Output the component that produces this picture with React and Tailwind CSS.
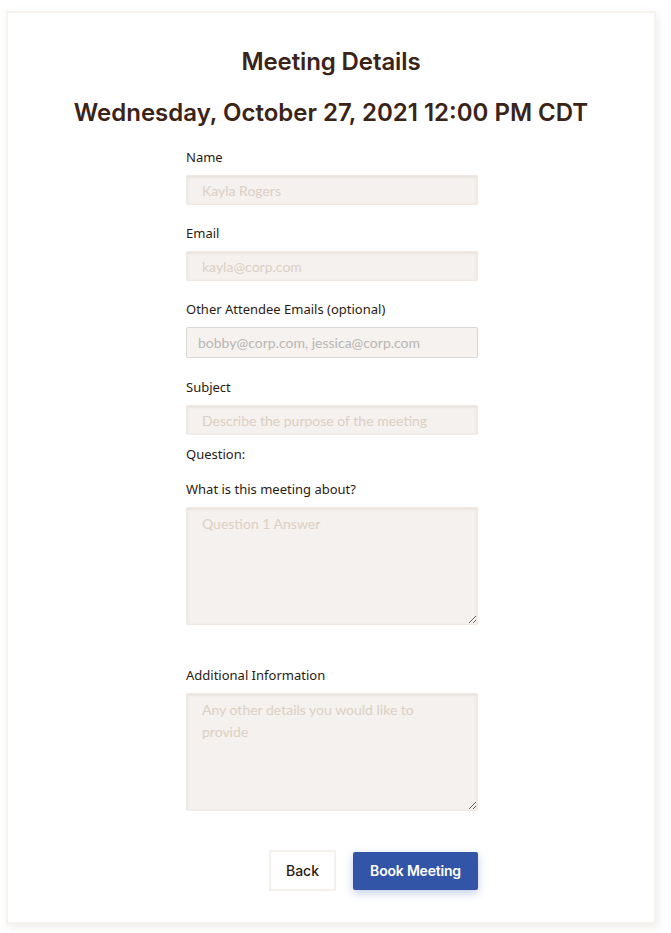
import React from "react";

const labelCls = "block text-[13px] leading-[18px] text-[#2b1a12]";
const inputCls =
  "block w-[292px] h-[30px] bg-[#f5f1ee] rounded-[2px] border border-[#f0e9e4] shadow-[inset_0_1px_3px_rgba(120,90,60,0.12)] pl-[15px] text-[14px] text-[#3a2a20] placeholder:text-[#dccfc4] outline-none";
const font = { fontFamily: "'Noto Sans', sans-serif" };
const phFont = { fontFamily: "Lato, 'Noto Sans', sans-serif" };

export default function App() {
  return (
    <div className="w-[671px] h-[933px] bg-white pt-[11px] pl-[6px]">
      <div className="w-[650px] h-[913px] bg-white border-2 border-[#f6f2ee] shadow-[2px_3px_8px_rgba(120,100,80,0.12)] flex flex-col items-center">
        <h1
          className="mt-[33px] text-[24px] leading-[32px] font-semibold text-[#3a2317] tracking-[-0.1px]"
          style={{ fontFamily: "Inter, sans-serif" }}
        >
          Meeting Details
        </h1>
        <h2
          className="mt-[18px] text-[24px] leading-[34px] font-semibold text-[#3a2317] tracking-[0px]"
          style={{ fontFamily: "Inter, sans-serif" }}
        >
          Wednesday, October 27, 2021 12:00 PM CDT
        </h2>
        <div className="w-[292px] mt-[18px] ml-[2px]" style={font}>
          <label className={labelCls}>Name</label>
          <input className={inputCls + " mt-[9px]"} style={phFont} placeholder="Kayla Rogers" />
          <label className={labelCls + " mt-[19px]"}>Email</label>
          <input className={inputCls + " mt-[9px]"} style={phFont} placeholder="kayla@corp.com" />
          <label className={labelCls + " mt-[19px]"}>Other Attendee Emails (optional)</label>
          <input
            className="block mt-[9px] w-[292px] h-[31px] bg-[#f5f2ef] rounded-[2px] border border-[#d9d6d3] pl-[11px] text-[14px] placeholder:text-[#b9b6b3] outline-none"
            style={phFont}
            placeholder="bobby@corp.com, jessica@corp.com"
          />
          <label className={labelCls + " mt-[20px]"}>Subject</label>
          <input className={inputCls + " mt-[9px]"} style={phFont} placeholder="Describe the purpose of the meeting" />
          <div className={labelCls + " mt-[10px]"}>Question:</div>
          <label className={labelCls + " mt-[17px]"}>What is this meeting about?</label>
          <textarea
            className="block mt-[9px] w-[292px] h-[118px] bg-[#f5f1ee] rounded-[2px] border border-[#f0e9e4] shadow-[inset_0_1px_3px_rgba(120,90,60,0.12)] pl-[15px] pr-[15px] pt-[5px] text-[14px] leading-[22px] placeholder:text-[#dccfc4] outline-none"
            style={phFont}
            placeholder="Question 1 Answer"
          />
          <label className={labelCls + " mt-[41px]"}>Additional Information</label>
          <textarea
            className="block mt-[9px] w-[292px] h-[118px] bg-[#f5f1ee] rounded-[2px] border border-[#f0e9e4] shadow-[inset_0_1px_3px_rgba(120,90,60,0.12)] pl-[15px] pr-[15px] pt-[5px] text-[14px] leading-[22px] placeholder:text-[#dccfc4] outline-none"
            style={phFont}
            placeholder="Any other details you would like to provide"
          />
          <div className="flex justify-end items-center gap-[17px] mt-[39px]" style={{ fontFamily: "Inter, sans-serif" }}>
            <button className="w-[67px] h-[41px] border-2 border-[#f5f1ed] bg-white text-[14px] font-medium text-[#2b1a12]">
              Back
            </button>
            <button className="w-[125px] h-[38px] rounded-[2px] bg-[#3355a8] text-white text-[14px] font-semibold shadow-[0_3px_8px_rgba(51,85,168,0.3)] tracking-[-0.2px]">
              Book Meeting
            </button>
          </div>
        </div>
      </div>
    </div>
  );
}
